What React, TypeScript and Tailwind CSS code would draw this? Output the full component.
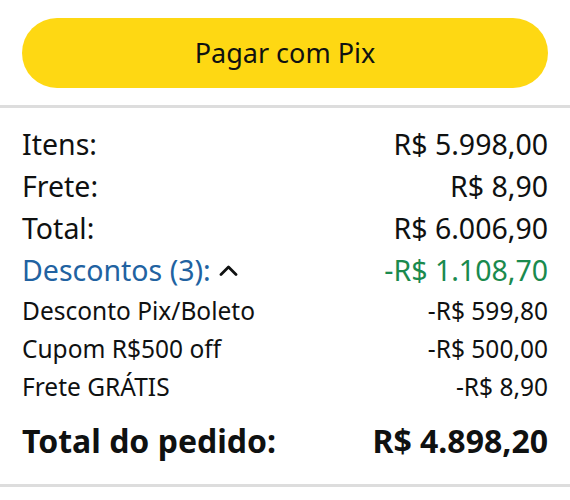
const rows = [
  { label: 'Itens:', value: 'R$ 5.998,00' },
  { label: 'Frete:', value: 'R$ 8,90' },
  { label: 'Total:', value: 'R$ 6.006,90' },
];

const discounts = [
  { label: 'Desconto Pix/Boleto', value: '-R$ 599,80' },
  { label: 'Cupom R$500 off', value: '-R$ 500,00' },
  { label: 'Frete GRÁTIS', value: '-R$ 8,90' },
];

export default function App() {
  return (
    <div className="w-[570px] h-[500px] bg-white text-[#0f1111] font-['Noto_Sans',sans-serif] overflow-hidden">
      <div className="pt-[18px] px-[22px] pb-[17px]">
        <button className="w-full h-[70px] rounded-full bg-[#fed813] text-[27px] text-[#0f1111]">
          Pagar com Pix
        </button>
      </div>
      <div className="h-[3px] bg-[#dddddd]" />

      <div className="px-[22px] pt-[15px]">
        {rows.map((r) => (
          <div key={r.label} className="flex justify-between items-center h-[42px] text-[28.5px]">
            <span>{r.label}</span>
            <span>{r.value}</span>
          </div>
        ))}

        <div className="flex justify-between items-center h-[42px] text-[28.5px]">
          <span className="flex items-center gap-[8px] text-[#2162a1]">
            Descontos (3):
            <svg width="19" height="11" viewBox="0 0 19 11" fill="none" aria-hidden="true">
              <path d="M2 9.5L9.5 2L17 9.5" stroke="#0f1111" strokeWidth="2.8" strokeLinecap="round" strokeLinejoin="round" />
            </svg>
          </span>
          <span className="text-[#1a8a4e]">-R$ 1.108,70</span>
        </div>

        <div className="pt-[1px]">
          {discounts.map((d) => (
            <div key={d.label} className="flex justify-between items-center h-[38px] text-[24.5px]">
              <span>{d.label}</span>
              <span>{d.value}</span>
            </div>
          ))}
        </div>

        <div className="flex justify-between items-center h-[70px] text-[32px] font-bold">
          <span>Total do pedido:</span>
          <span>R$ 4.898,20</span>
        </div>
      </div>

      <div className="mt-[8px] h-[3px] bg-[#dddddd]" />
    </div>
  );
}
